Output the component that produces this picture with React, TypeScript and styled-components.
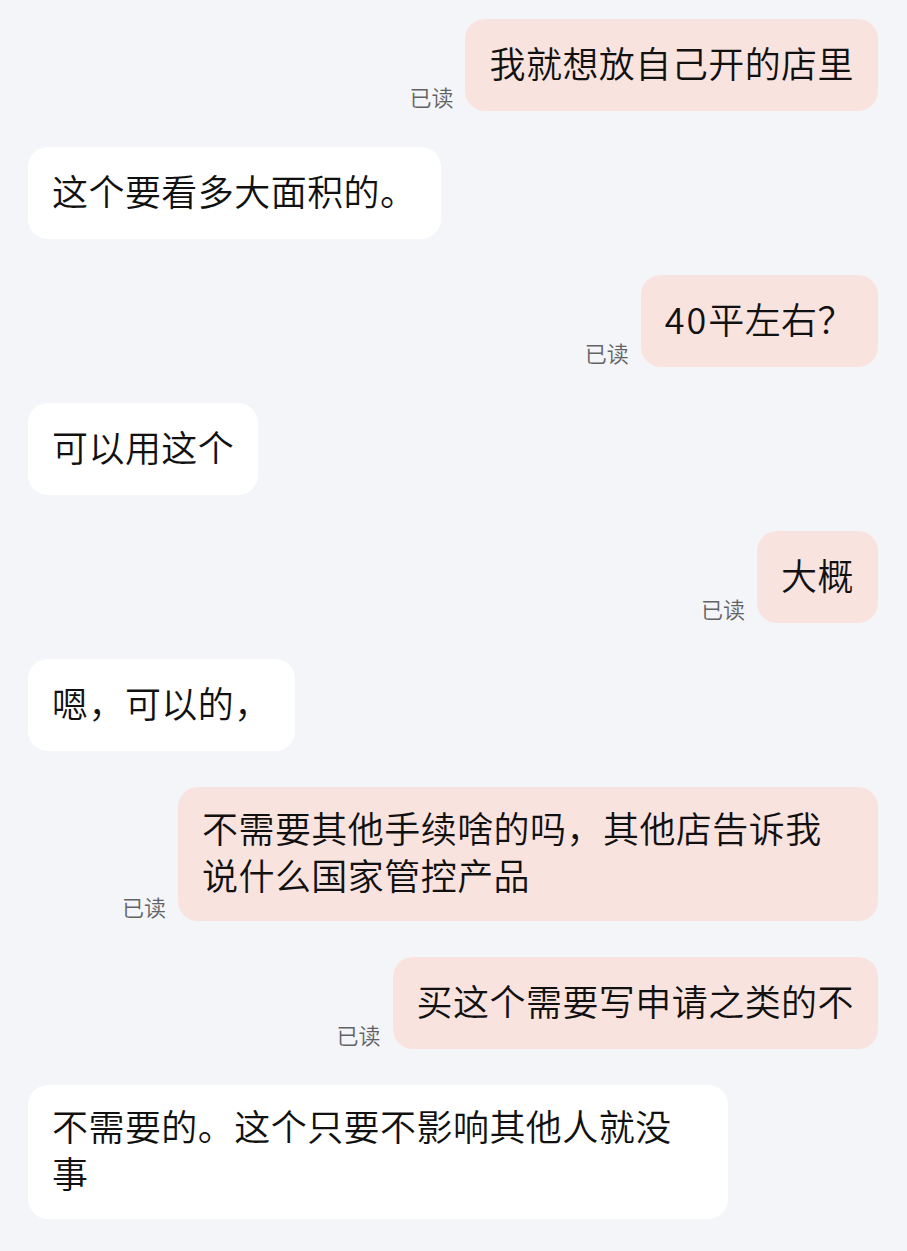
import React from "react";
import styled, { createGlobalStyle } from "styled-components";

const GlobalStyle = createGlobalStyle`
  html, body {
    margin: 0;
    padding: 0;
    background: #f4f5f9;
  }
  body {
    font-family: "Noto Sans CJK SC", "Noto Sans", sans-serif;
    -webkit-font-smoothing: antialiased;
  }
`;

const Page = styled.div`
  box-sizing: border-box;
  width: 907px;
  min-height: 1251px;
  background: #f4f5f9;
  padding: 19px 29px 0 28px;
  display: flex;
  flex-direction: column;
  gap: 36px;
`;

const Row = styled.div<{ $mine: boolean }>`
  display: flex;
  flex-direction: row;
  align-items: flex-end;
  justify-content: ${(p) => (p.$mine ? "flex-end" : "flex-start")};
  gap: 12px;
`;

const ReadMark = styled.span`
  font-size: 22px;
  line-height: 22px;
  font-weight: 350;
  color: #626366;
  margin-bottom: 4px;
  flex-shrink: 0;
`;

const Bubble = styled.div<{ $mine: boolean }>`
  box-sizing: border-box;
  max-width: 700px;
  min-height: 92px;
  display: flex;
  align-items: center;
  padding: 17px 24px 23px;
  border-radius: 20px;
  background: ${(p) => (p.$mine ? "#f9e3df" : "#ffffff")};
  color: #111111;
  font-size: 36px;
  font-weight: 350;
  line-height: 47px;
  letter-spacing: 0.45px;
  word-break: break-all;
`;

const Digits = styled.span`
  letter-spacing: 2px;
`;

type Msg = { mine: boolean; text: React.ReactNode };

const messages: Msg[] = [
  { mine: true, text: "我就想放自己开的店里" },
  { mine: false, text: "这个要看多大面积的。" },
  {
    mine: true,
    text: (
      <>
        <Digits>40</Digits>平左右？
      </>
    ),
  },
  { mine: false, text: "可以用这个" },
  { mine: true, text: "大概" },
  { mine: false, text: "嗯，可以的，" },
  { mine: true, text: "不需要其他手续啥的吗，其他店告诉我说什么国家管控产品" },
  { mine: true, text: "买这个需要写申请之类的不" },
  { mine: false, text: "不需要的。这个只要不影响其他人就没事" },
];

export default function App() {
  return (
    <>
      <GlobalStyle />
      <Page>
        {messages.map((m, i) => (
          <Row key={i} $mine={m.mine}>
            {m.mine && <ReadMark>已读</ReadMark>}
            <Bubble $mine={m.mine}>
              <span>{m.text}</span>
            </Bubble>
          </Row>
        ))}
      </Page>
    </>
  );
}
